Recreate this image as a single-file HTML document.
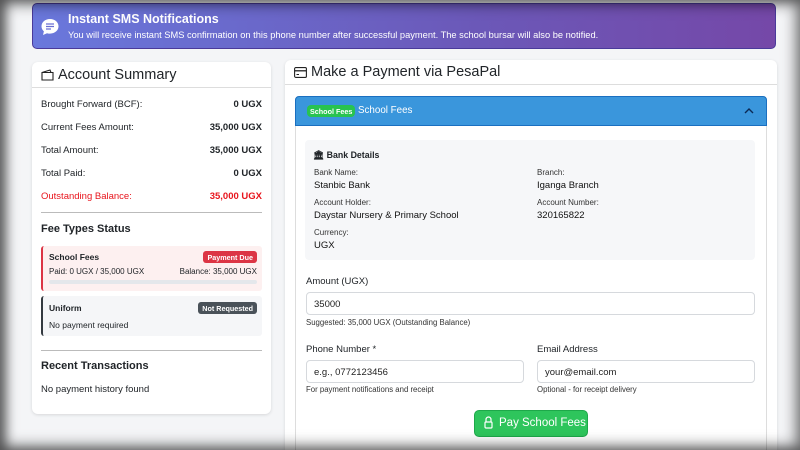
<!DOCTYPE html>
<html style="width:800px;height:450px;overflow:hidden"><head><style>
*{box-sizing:border-box;margin:0;padding:0}
body{width:800px;height:450px;overflow:hidden;background:#f4f5f7;font-family:"Liberation Sans",sans-serif;color:#212529;position:relative}
.abs{position:absolute}
.vig{position:absolute;left:0;top:0;width:800px;height:450px;box-shadow:inset 0 0 14px 4px rgba(0,0,0,.55),inset 6px 0 10px rgba(0,0,0,.3);pointer-events:none;z-index:10}
.banner{left:32px;top:3px;width:744px;height:46px;border-radius:5px;background:linear-gradient(90deg,#6a78dc,#6b58b8 60%,#7548a8);border:1px solid #4a3a9a;color:#fff}
.card{background:#fff;border-radius:6px;box-shadow:0 1px 3px rgba(0,0,0,.12)}
.row{position:absolute;left:9px;right:9px;font-size:9.5px;display:flex;justify-content:space-between}
.row b{font-size:9.5px}
.lbl{font-size:8px;color:#333}
.val{font-size:9.5px;color:#111}
.inp{position:absolute;height:23px;border:1px solid #d6d9dd;border-radius:4px;background:#fff;font-size:9.5px;padding:6px 7px;color:#222}
.small{position:absolute;font-size:7.8px;color:#333}
</style></head><body>
<div class="abs banner">
 <svg class="abs" style="left:7px;top:13px" width="20" height="20" viewBox="0 0 20 20"><path d="M10 2C5 2 1.5 5.3 1.5 9.3c0 2 .9 3.8 2.4 5.1L3 18l4-1.8c1 .3 2 .4 3 .4 5 0 8.5-3.3 8.5-7.3S15 2 10 2z" fill="#fff"/><path d="M6 7h8M6 9.5h8M6 12h5" stroke="#6a6fd4" stroke-width="1.3"/></svg>
 <div class="abs" style="left:35px;top:8px;font-size:12.5px;font-weight:bold">Instant SMS Notifications</div>
 <div class="abs" style="left:35px;top:26px;font-size:9.3px;white-space:nowrap">You will receive instant SMS confirmation on this phone number after successful payment. The school bursar will also be notified.</div>
</div>

<div class="abs card" style="left:32px;top:62px;width:239px;height:352px">
 <div class="abs" style="left:0;right:0;top:0;height:26px;border-bottom:1px solid #ddd"></div>
 <svg class="abs" style="left:9px;top:7px" width="13" height="12" viewBox="0 0 13 12"><path d="M1 3.5h11v7.5H1zM1 3.5L9 1l1 2.5" fill="none" stroke="#222" stroke-width="1.1"/></svg>
 <div class="abs" style="left:26px;top:5px;font-size:14.5px">Account Summary</div>
 <div class="row" style="top:37px"><span>Brought Forward (BCF):</span><b>0 UGX</b></div>
 <div class="row" style="top:60px"><span>Current Fees Amount:</span><b>35,000 UGX</b></div>
 <div class="row" style="top:83px"><span>Total Amount:</span><b>35,000 UGX</b></div>
 <div class="row" style="top:106px"><span>Total Paid:</span><b>0 UGX</b></div>
 <div class="row" style="top:129px;color:#e8141c"><span>Outstanding Balance:</span><b>35,000 UGX</b></div>
 <div class="abs" style="left:9px;right:9px;top:150px;border-top:1px solid #bbb"></div>
 <div class="abs" style="left:9px;top:161px;font-size:11px;font-weight:bold">Fee Types Status</div>
 <div class="abs" style="left:9px;right:9px;top:184px;height:45px;background:#fdf0f0;border-left:2px solid #dc3545;border-radius:3px">
  <div class="abs" style="left:6px;top:6px;font-size:8.5px;font-weight:bold">School Fees</div>
  <div class="abs" style="right:5px;top:5px;font-size:7.2px;font-weight:bold;color:#fff;background:#dc3545;border-radius:3px;padding:1.5px 4px">Payment Due</div>
  <div class="abs" style="left:6px;top:21px;font-size:8px">Paid: 0 UGX / 35,000 UGX</div>
  <div class="abs" style="right:5px;top:21px;font-size:8px">Balance: 35,000 UGX</div>
  <div class="abs" style="left:6px;right:5px;top:34px;height:4px;background:#e4e7eb;border-radius:2px"></div>
 </div>
 <div class="abs" style="left:9px;right:9px;top:234px;height:40px;background:#f5f6f8;border-left:2px solid #343a40;border-radius:3px">
  <div class="abs" style="left:6px;top:7px;font-size:8.5px;font-weight:bold">Uniform</div>
  <div class="abs" style="right:5px;top:6px;font-size:7.2px;font-weight:bold;color:#fff;background:#4a5259;border-radius:3px;padding:1.5px 4px">Not Requested</div>
  <div class="abs" style="left:6px;top:24px;font-size:8.5px">No payment required</div>
 </div>
 <div class="abs" style="left:9px;right:9px;top:288px;border-top:1px solid #bbb"></div>
 <div class="abs" style="left:9px;top:298px;font-size:11px;font-weight:bold">Recent Transactions</div>
 <div class="abs" style="left:9px;top:322px;font-size:9.5px">No payment history found</div>
</div>

<div class="abs card" style="left:285px;top:60px;width:492px;height:390px;border-radius:6px 6px 0 0">
 <div class="abs" style="left:0;right:0;top:0;height:25px;border-bottom:1px solid #ddd"></div>
 <svg class="abs" style="left:9px;top:7px" width="13" height="11" viewBox="0 0 13 11"><rect x=".6" y=".6" width="11.8" height="9.8" rx="1.2" fill="none" stroke="#222" stroke-width="1.1"/><path d="M.6 3.8h11.8" stroke="#222" stroke-width="1.3"/><path d="M2.5 7.5h2.5" stroke="#222"/></svg>
 <div class="abs" style="left:26px;top:4px;font-size:14.5px">Make a Payment via PesaPal</div>
 <div class="abs" style="left:10px;top:36px;width:472px;height:360px;border:1px solid #ddd;border-radius:4px"></div>
 <div class="abs" style="left:10px;top:36px;width:472px;height:30px;background:#3a96dc;border:1px solid #1a6fc0;border-radius:4px 4px 0 0">
  <div class="abs" style="left:11px;top:8px;font-size:7.2px;font-weight:bold;color:#fff;background:#28c350;border-radius:4px;padding:1.5px 3px">School Fees</div>
  <div class="abs" style="left:62px;top:8px;font-size:9.8px;color:#fff">School Fees</div>
  <svg class="abs" style="right:12px;top:10px" width="10" height="7" viewBox="0 0 10 7"><path d="M1 6l4-4 4 4" fill="none" stroke="#0c2a55" stroke-width="1.4"/></svg>
 </div>
 <div class="abs" style="left:20px;top:80px;width:450px;height:120px;background:#f6f7f9;border-radius:4px">
  <div class="abs" style="left:8px;top:10px;font-size:8.8px;font-weight:bold">🏛 Bank Details</div>
  <div class="abs lbl" style="left:9px;top:28px">Bank Name:</div>
  <div class="abs val" style="left:9px;top:40px">Stanbic Bank</div>
  <div class="abs lbl" style="left:9px;top:58px">Account Holder:</div>
  <div class="abs val" style="left:9px;top:70px">Daystar Nursery &amp; Primary School</div>
  <div class="abs lbl" style="left:9px;top:88px">Currency:</div>
  <div class="abs val" style="left:9px;top:100px">UGX</div>
  <div class="abs lbl" style="left:232px;top:28px">Branch:</div>
  <div class="abs val" style="left:232px;top:40px">Iganga Branch</div>
  <div class="abs lbl" style="left:232px;top:58px">Account Number:</div>
  <div class="abs val" style="left:232px;top:70px">320165822</div>
 </div>
 <div class="abs" style="left:21px;top:216px;font-size:9.5px">Amount (UGX)</div>
 <div class="inp" style="left:21px;top:232px;width:449px">35000</div>
 <div class="small" style="left:21px;top:258px">Suggested: 35,000 UGX (Outstanding Balance)</div>
 <div class="abs" style="left:21px;top:284px;font-size:9.5px">Phone Number *</div>
 <div class="inp" style="left:21px;top:300px;width:218px">e.g., 0772123456</div>
 <div class="small" style="left:21px;top:325px">For payment notifications and receipt</div>
 <div class="abs" style="left:252px;top:284px;font-size:9.5px">Email Address</div>
 <div class="inp" style="left:252px;top:300px;width:218px">your@email.com</div>
 <div class="small" style="left:252px;top:325px">Optional - for receipt delivery</div>
 <div class="abs" style="left:189px;top:350px;width:114px;height:27px;background:#2ec55c;border:1px solid #1ea84a;border-radius:5px;color:#fff;font-size:11.5px;padding:6px 0 0 24px">Pay School Fees</div>
 <svg class="abs" style="left:199px;top:356px" width="9" height="13" viewBox="0 0 9 13"><path d="M2 6V3.5a2.5 2.5 0 0 1 5 0V6" fill="none" stroke="#fff" stroke-width="1.2"/><rect x="1" y="6" width="7" height="6" rx="1" fill="none" stroke="#fff" stroke-width="1.2"/></svg>
</div>
<div class="vig"></div>
</body></html>
